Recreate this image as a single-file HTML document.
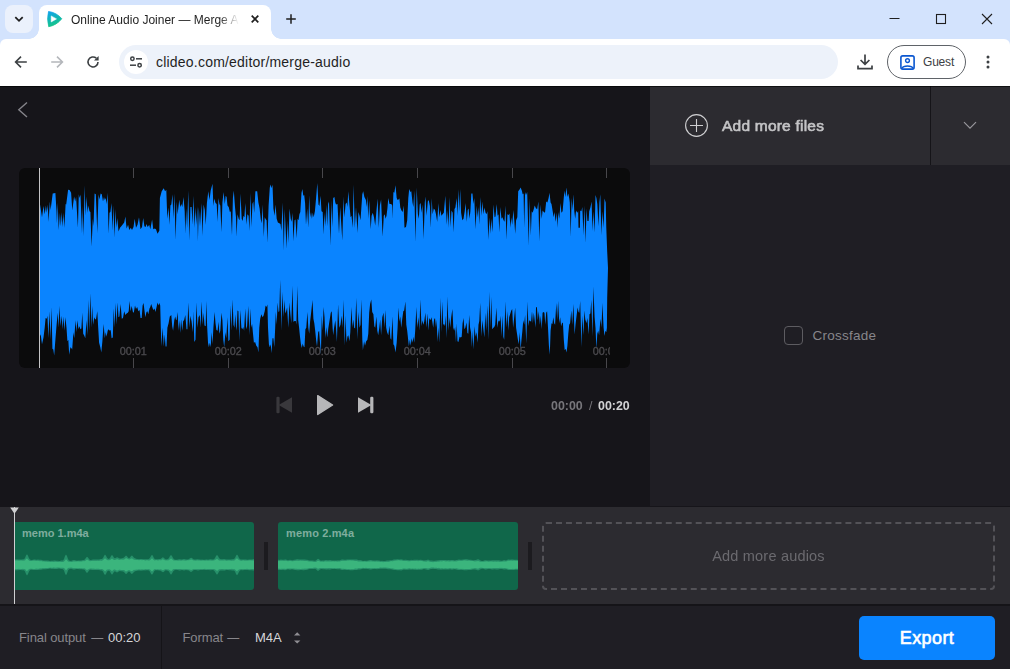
<!DOCTYPE html>
<html lang="en">
<head>
<meta charset="utf-8">
<title>Online Audio Joiner — Merge Audio</title>
<style>
*{box-sizing:border-box;margin:0;padding:0}
html,body{width:1010px;height:669px;overflow:hidden;background:#16151a;font-family:"Liberation Sans",Arial,sans-serif}
.abs{position:absolute}
#chrome{position:absolute;left:0;top:0;width:1010px;height:86px;background:#d3e3fd}
#tabsearch{position:absolute;left:5px;top:5px;width:28px;height:28px;border-radius:8px;background:#ebf1fc}
#tab{position:absolute;left:39px;top:5px;width:232px;height:34px;background:#fff;border-radius:8px 8px 0 0}
#tab:before,#tab:after{content:"";position:absolute;bottom:0;width:10px;height:10px;background:radial-gradient(circle at 0 0,rgba(255,255,255,0) 9.5px,#fff 10px)}
#tab:before{left:-10px}
#tab:after{right:-10px;transform:scaleX(-1)}
#tabtitle{position:absolute;left:32px;top:7px;width:170px;height:16px;font-size:12px;line-height:16px;color:#1f1f1f;white-space:nowrap;overflow:hidden;letter-spacing:0;
 -webkit-mask-image:linear-gradient(90deg,#000 0,#000 148px,transparent 168px);mask-image:linear-gradient(90deg,#000 0,#000 148px,transparent 168px)}
#toolbar{position:absolute;left:0;top:39px;width:1010px;height:47px;background:#fff;border-radius:6px 6px 0 0}
#omni{position:absolute;left:119px;top:6px;width:719px;height:34px;border-radius:17px;background:#edf2fa}
#siteinfo{position:absolute;left:5px;top:5px;width:24px;height:24px;border-radius:12px;background:#fff}
#url{position:absolute;left:37px;top:8px;font-size:14px;line-height:18px;color:#1f1f1f;white-space:nowrap;letter-spacing:0.21px}
#guest{position:absolute;left:887px;top:6px;width:79px;height:34px;border-radius:17px;border:1px solid #5f6368}
#guest span{position:absolute;left:35px;top:8px;font-size:12px;line-height:16px;color:#3c4043;letter-spacing:-0.2px}
svg{position:absolute;overflow:visible}
#app{position:absolute;left:0;top:86px;width:1010px;height:583px;background:#16151a}
#wavebox{position:absolute;left:19px;top:82px;width:611px;height:200px;border-radius:6px;background:#0b0b0c;overflow:hidden}
#side{position:absolute;left:650px;top:0;width:360px;height:420px;background:#1f1e24}
#sidehead{position:absolute;left:0;top:0;width:360px;height:79px;background:#2c2b30}
#sidehead .sep{position:absolute;left:280px;top:0;width:1px;height:79px;background:#151418}
#addfiles{position:absolute;left:72px;top:30px;font-size:15.5px;line-height:20px;font-weight:normal;color:#c4c4c6;white-space:nowrap;-webkit-text-stroke:0.6px #c4c4c6;letter-spacing:0.22px;will-change:transform}
#cb{position:absolute;left:134px;top:240px;width:19px;height:19px;border:1px solid #5d5c61;border-radius:4px}
#cf{position:absolute;left:162.5px;top:242px;font-size:13.5px;line-height:16px;color:#87868b;white-space:nowrap;letter-spacing:0.25px}
.time{position:absolute;top:312px;will-change:transform;transform:translate(0,0.55px);font-size:12.4px;line-height:14px;font-weight:bold;white-space:nowrap}
#timeline{position:absolute;left:0;top:421px;width:1010px;height:98px;background:#2c2b30}
.clip{position:absolute;top:15px;height:68px;border-radius:3px;background:#10674a;overflow:hidden}
.clip b{position:absolute;left:7.5px;top:5px;font-size:11px;line-height:13px;color:rgba(255,255,255,.47);white-space:nowrap;font-weight:bold;letter-spacing:0.15px}
.handle{position:absolute;top:35px;width:4px;height:28px;background:#1c1b1f}
#addmore{position:absolute;left:542px;top:15px;width:453px;height:68px;border:2px dashed #535257;border-radius:4px}
#addmore span{will-change:transform;position:absolute;left:-2px;width:453px;top:24px;text-align:center;font-size:14.5px;line-height:16px;color:#6b6a6f;letter-spacing:0.2px}
#bottom{position:absolute;left:0;top:520px;width:1010px;height:63px;background:#1f1e24}
#bottom .t{position:absolute;top:24px;font-size:13px;line-height:16px;white-space:nowrap}
#export{position:absolute;left:859px;top:10px;width:136px;height:44px;border-radius:5px;background:#0a84ff;color:#fff;font-size:18px;font-weight:normal;-webkit-text-stroke:0.65px #fff;letter-spacing:0.42px;line-height:44px;text-align:center}
</style>
</head>
<body>
<div id="chrome">
  <div id="tabsearch"><svg width="28" height="28" viewBox="0 0 28 28"><path d="M10.3 12.2 L14 15.8 L17.7 12.2" fill="none" stroke="#1f1f1f" stroke-width="1.8"/></svg></div>
  <div id="tab">
    <svg id="favicon" style="left:8px;top:6px" width="16" height="17" viewBox="0 0 16 17"><defs><linearGradient id="fg" x1="0.2" y1="0" x2="0.5" y2="1"><stop offset="0" stop-color="#12a3ea"/><stop offset="0.5" stop-color="#10b7b4"/><stop offset="1" stop-color="#17c681"/></linearGradient></defs><path d="M1.5 0.5 Q9.4 1.5 14.8 7.7 Q9.6 14.2 1.7 15.7 Q-0.3 8 1.5 0.5 Z" fill="url(#fg)" stroke="url(#fg)" stroke-width="0.8" stroke-linejoin="round"/><path d="M4.2 4.9 L9.5 7.9 L4.2 11 Z" fill="#fff" stroke="#fff" stroke-width="0.5" stroke-linejoin="round"/></svg>
    <div id="tabtitle">Online Audio Joiner — Merge Audio Files Online</div>
    <svg style="left:210px;top:8px" width="12" height="12" viewBox="0 0 12 12"><path d="M2.7 2.7 L9.3 9.3 M9.3 2.7 L2.7 9.3" stroke="#1f1f1f" stroke-width="1.7" fill="none"/></svg>
  </div>
  <svg style="left:284px;top:12px" width="14" height="14" viewBox="0 0 14 14"><path d="M7 2.2 V11.8 M2.2 7 H11.8" stroke="#1f1f1f" stroke-width="1.5" fill="none"/></svg>
  <svg style="left:889px;top:13px" width="12" height="12" viewBox="0 0 12 12"><path d="M0.5 5.5 H10.5" stroke="#1f1f1f" stroke-width="1" fill="none"/></svg>
  <svg style="left:936px;top:14px" width="10" height="10" viewBox="0 0 10 10"><rect x="0.5" y="0.5" width="9" height="9" stroke="#1f1f1f" stroke-width="1.1" fill="none"/></svg>
  <svg style="left:982px;top:14px" width="10" height="10" viewBox="0 0 10 10"><path d="M0 0 L10 10 M10 0 L0 10" stroke="#1f1f1f" stroke-width="1.1" fill="none"/></svg>
  <div id="toolbar">
    <svg style="left:13px;top:15px" width="16" height="16" viewBox="0 0 16 16"><path d="M13.8 8 H3 M8 2.6 L2.6 8 L8 13.4" stroke="#3c4043" stroke-width="1.6" fill="none"/></svg>
    <svg style="left:49px;top:15px" width="16" height="16" viewBox="0 0 16 16"><path d="M2.2 8 H13 M8 2.6 L13.4 8 L8 13.4" stroke="#b4b7bb" stroke-width="1.6" fill="none"/></svg>
    <svg style="left:85px;top:15px" width="16" height="16" viewBox="0 0 16 16"><path d="M13 8 A5 5 0 1 1 11.3 4.2" stroke="#3c4043" stroke-width="1.6" fill="none"/><path d="M13.6 2 V6.6 H9 Z" fill="#3c4043"/></svg>
    <div id="omni">
      <div id="siteinfo"><svg style="left:5px;top:5px" width="14" height="14" viewBox="0 0 14 14"><g stroke="#3c4043" stroke-width="1.5" fill="none"><circle cx="3.4" cy="3.8" r="1.7"/><path d="M7 3.8 H13"/><circle cx="10.6" cy="10.2" r="1.7"/><path d="M1 10.2 H7"/></g></svg></div>
      <div id="url">clideo.com/editor/merge-audio</div>
    </div>
    <svg style="left:857px;top:15px" width="16" height="16" viewBox="0 0 16 16"><path d="M8 0.5 V10 M3.6 6 L8 10.4 L12.4 6 M1 11.5 V14.6 H15 V11.5" stroke="#3c4043" stroke-width="1.7" fill="none"/></svg>
    <div id="guest"><svg style="left:12px;top:9px" width="15" height="15" viewBox="0 0 15 15"><rect x="0.9" y="0.9" width="13.2" height="13.2" rx="1.8" stroke="#0b57d0" stroke-width="1.6" fill="none"/><circle cx="7.5" cy="5.6" r="1.9" stroke="#0b57d0" stroke-width="1.4" fill="none"/><path d="M2 13.4 C3.4 10.2 11.6 10.2 13 13.4" stroke="#0b57d0" stroke-width="1.5" fill="none"/></svg><span>Guest</span></div>
    <svg style="left:986px;top:16px" width="4" height="14" viewBox="0 0 4 14"><g fill="#3c4043"><circle cx="2" cy="2" r="1.5"/><circle cx="2" cy="7" r="1.5"/><circle cx="2" cy="12" r="1.5"/></g></svg>
  </div>
</div>
<div id="app">
  <svg style="left:17px;top:15px" width="12" height="18" viewBox="0 0 12 18"><path d="M10 1.5 L1.8 8.8 L10 16" stroke="#85848a" stroke-width="1.4" fill="none"/></svg>
  <div id="wavebox">
    <svg id="wave" style="left:0;top:0;will-change:transform" width="611" height="200" viewBox="0 0 611 200"><defs><clipPath id="wclip"><rect x="0" y="0" width="591" height="200"/></clipPath></defs><path d="M20.7 34.4 23 49.3 24.5 38.1 25.7 46.3 26.9 37.4 27.8 44.8 28.7 36.6 29.6 53.8 30.8 33.6 31.6 41.9 33.7 25.4 36.4 25.1 37.5 43.3 37.9 55.3 38.7 34.4 39.7 62 40.9 44.8 41.8 58.3 42.7 44.1 43.6 59 44.5 44.8 45.4 59.8 46.6 35.9 47.2 36.6 49.1 21.7 50.6 22.1 52.1 24.7 53.3 42.6 55.1 28.4 56.2 33.6 57.1 29.1 58.9 59.8 59.8 26.2 60.6 29.9 61.5 26.6 63 65.8 63.6 37.4 64.5 68 65.6 17.6 66.6 47.8 67.5 28.4 68.6 44.8 69.3 37.4 70.5 43.3 71.4 44.1 72.6 78.5 73.8 50.8 74.5 58.3 75.6 25.4 76.8 26.2 78.3 65 79.5 26.2 80.4 31.4 81.6 25.4 82.8 26.2 84 33.6 85 29.1 85.8 32.1 86.7 29.9 87.6 35.9 88.6 24.7 89.6 65.8 90.5 44.8 91.4 44.1 92.5 35.1 93.5 62.8 94.4 37.4 95.6 69.5 96.5 41.1 97.4 59.8 98.3 50.1 99.5 63.5 101 59.8 102.9 57.5 105.2 54.6 106.4 48.6 107.6 60.5 109.1 56.8 110.3 62 111.8 59.8 113 62 114.5 59 115.7 50.8 117 59.8 118.5 56.8 120 49.3 121.5 61.3 123 59 124.2 50.1 125.4 58.3 126.6 59 127.5 56.1 128.7 59 130.2 56.8 131.3 61.3 133.1 51.6 134.3 61.3 135.8 60.5 137 61.3 138.5 65.8 140.3 62.8 140.9 29.9 142.7 23.2 144.7 20.2 146.1 23.2 147.3 21.7 147.9 38.9 148.4 50.8 149.6 39.6 150.5 56.8 151.4 37.4 152.3 36.6 153.5 26.2 154.4 50.8 155.4 25.4 156.6 71.7 157.7 33.6 158.6 46.3 160.3 31.4 161.2 38.9 162.4 35.9 163.3 38.9 164.5 29.1 165.7 43.3 166.3 65.8 167.2 40.4 168.1 59.8 169.3 22.4 170.5 72.5 171.4 38.9 172.6 38.9 173.5 56.8 174.4 27.7 175.6 59.8 176.5 38.9 177.4 56.8 178.3 38.1 178.9 73.2 179.8 38.9 181 58.3 182.5 35.1 183.5 68 184.6 36.6 185.8 41.9 186.7 56.8 187.9 35.1 189.3 23.2 190.5 32.1 191.7 22.4 193.5 15.7 194.4 38.1 195.3 30.6 196.5 35.1 197.7 35.9 198.6 53.8 199.5 29.9 200.4 35.9 201.3 37.4 202.5 64.3 203.4 34.4 204.6 23.9 205.8 35.9 206.7 27.7 207.6 29.1 208.5 37.4 209.7 38.9 210.9 44.1 211.8 43.3 213 67.3 213.9 29.9 214.8 22.4 216 38.9 217 49.3 217.6 68.8 218.5 46.3 219.7 50.8 220.6 52.3 221.5 25.4 222.7 50.8 223.6 53.1 224.5 47.8 225.4 49.3 226.3 35.1 227.5 56.8 228.4 46.3 229.6 47.8 230.5 62.8 231.3 24.7 232.5 59 233.4 35.9 234.3 33.6 235.2 44.8 236.4 23.2 238.2 23.2 239.4 34.4 240.6 40.4 241.8 51.6 242.7 55.3 243.6 36.6 244.8 68.8 245.7 49.3 246.9 51.6 247.6 52.3 248.4 74.7 249.6 37.4 250.8 19.4 251.7 16.4 252.6 20.2 253.5 16.4 254.4 40.4 255.6 47.8 256.5 36.6 257.7 50.8 258.9 54.6 260.3 55.3 261.5 56.1 262.4 62.8 263.6 34.4 264.8 82.2 265.7 41.1 266.6 59.8 267.5 80.7 268.4 52.3 269.3 74.7 270.5 40.4 271.7 50.8 272.6 53.8 273.5 44.8 274.4 73.2 275.6 52.3 276.5 51.6 277.7 70.3 278.6 50.8 279.5 52.3 280.4 46.3 281.3 44.1 282.5 24.7 283.4 20.9 284.3 27.7 285.2 26.9 286.1 35.1 287 56.8 288.2 40.4 289.3 59.8 290.2 26.9 291.1 49.3 292 44.1 292.9 50.8 293.8 44.8 294.7 49.3 295.9 43.3 297.1 29.9 298.3 14.9 299.5 36.6 300.4 38.1 301.6 27.7 302.5 43.3 303.7 44.1 304.6 66.5 305.5 44.8 306.4 58.3 307.3 36.6 308.2 58.3 309.1 35.9 310 33.6 311.5 77.7 312.4 32.1 313.3 59 314.2 29.9 315.4 29.1 316.3 34.4 317 36.6 318.5 35.9 320 65.8 321.2 38.9 323.3 72.5 324.5 28.4 325.4 49.3 326.6 35.9 327.8 34.4 328.4 38.9 329.3 23.2 330.5 37.4 331.6 49.3 332.5 47.8 333.7 59.8 334.6 16.4 335.8 59.8 337 38.9 338.5 65 339.4 44.1 340.6 47.8 341.5 52.3 342.4 38.9 343.3 26.2 344.2 23.2 345.4 29.1 346.9 32.1 347.8 38.9 348.4 27.7 349.3 50.8 350.2 32.1 351.7 61.3 352.6 47.8 353.8 44.8 355 49.3 356.2 57.5 357.4 43.3 358.6 30.6 359.8 59.8 360.9 37.4 362.1 31.4 363.6 68.8 364.8 47.8 365.7 46.3 366.6 50.8 367.5 47.8 368.4 40.4 369.3 29.9 370.5 35.9 372.3 35.9 373.2 37.4 373.5 50.8 374.4 23.9 375.3 24.7 376.5 17.2 377.7 29.9 378.6 32.1 379.5 31.4 380.4 30.6 381.3 39.6 382.5 42.6 383.7 44.1 384.6 37.4 385.5 59.8 387 59 388.2 52.3 389.3 29.9 390.2 20.9 391.4 23.9 392.3 23.2 393.5 34.4 394.4 38.9 395.3 22.4 396.5 74 397.7 19.4 398.9 46.3 399.8 50.8 400.7 36.6 401.6 35.1 402.5 44.8 403.4 36.6 404.6 71 405.8 34.4 406.4 28.4 407.6 47.8 408.8 33.6 409.7 32.1 410.9 38.1 411.8 59.8 412.7 29.9 413.6 46.3 414.8 40.4 416 41.9 417 46.3 418.2 53.8 419.4 35.1 420.3 49.3 421.5 41.9 422.4 47.8 423.6 46.3 424.8 44.8 426.3 27.7 427.8 56.8 428.7 41.9 429.6 59.8 430.5 29.1 431.6 59 432.5 42.6 433.7 44.8 434.6 64.3 435.5 41.1 436.4 39.6 437.6 29.9 438.5 47.8 439.4 20.9 440.3 43.3 441.2 20.9 442.1 44.8 443.3 52.3 444.5 50.8 445.7 43.3 446.6 35.1 447.8 53.8 448.7 41.9 449.6 40.4 450.5 50.8 451.4 43.3 452.3 25.4 453.5 25.4 454.4 35.9 455.3 29.9 456.5 61.3 457.7 37.4 458.6 49.3 459.5 38.9 460.3 56.8 461.2 29.1 462.4 47.8 463.3 33.6 464.5 46.3 465.4 39.6 466.6 44.8 467.5 46.3 468.4 43.3 469.3 71.7 470.5 49.3 471.4 65.8 472.3 50.8 473.5 64.3 474.4 36.6 475.6 49.3 476.5 48.6 477.7 35.9 478.6 47.8 479.5 46.3 480.4 64.3 481.3 38.9 482.5 50.8 483.4 49.3 484.6 52.3 485.5 53.8 486.4 37.4 487.6 71.7 488.4 46.3 489.6 47.1 490.5 45.6 491.4 59.8 492.3 49.3 493.2 56.8 494.4 41.9 495.3 52.3 496.2 65.8 497.1 52.3 498.3 49.3 499.2 23.2 500.4 21.7 501.6 19.4 502.8 22.4 503.7 26.2 504.6 25.4 505.2 59.8 506.1 23.9 507 26.9 508.2 23.9 509.7 77.7 510.6 29.9 511.8 67.3 512.7 43.3 513.6 44.8 514.5 41.9 515.7 37.4 517 40.4 518.2 41.1 519.4 33.6 520.3 73.2 521.5 36.6 522.7 50.8 523.6 42.6 524.8 44.1 526 44.8 527.2 33.6 528.4 34.4 529.6 29.9 530.5 24.7 531.6 34.4 532.5 35.9 533.7 43.3 534.6 49.3 535.5 44.1 536.7 53.8 537.9 44.8 538.5 59.8 539.4 44.1 540.3 50.8 541.5 35.1 542.4 44.8 543.6 43.3 544.5 32.9 545.4 22.4 546.3 29.1 547.5 19.4 548.4 29.1 549.3 25.4 550.2 29.9 550.8 34.4 551.7 68.8 552.6 29.9 553.5 41.9 554.4 26.2 555.3 43.3 556.2 50.8 557.1 42.6 558.3 44.8 559.2 43.3 559.5 59.8 560.9 59.8 561.2 42.6 562.4 43.3 563.3 38.9 564.5 67.3 565.4 37.4 566.6 74.7 567.5 40.4 568.4 53.1 569.6 53.1 570.2 43.3 571.4 39.6 572.6 33.6 573.5 62.8 574.4 43.3 575.6 64.3 576.5 26.9 577.4 29.9 578.3 35.9 579.5 58.3 580.4 34.4 581.3 26.2 582.5 67.3 583.4 43.3 584.6 59.8 585.5 30.6 586.7 34.4 587.3 59.8 588.2 83.7 589 100 L589 100 588.2 129.9 587.9 159.8 587.3 164.3 586.4 162.8 585.5 168 584.6 159.8 583.4 135.1 582.5 159.8 581.6 150.8 581 156.8 580.1 167.3 579.2 162.8 578.3 165.8 577.4 180.7 576.5 159.8 575.6 149.3 574.4 118.7 573.5 168.8 572.3 132.1 571.4 145.6 570.5 146.3 569.6 166.5 568.4 150.1 567.5 155.3 566.3 151.6 565.4 142.6 564.5 167.3 563.3 147.8 562.4 179.2 561.2 132.9 560.3 144.8 559.5 144.1 558.6 139.6 557.4 149.3 556.5 156.8 555.6 166.5 554.4 135.9 553.2 156.8 552.3 142.6 551.1 155.3 550.2 156.8 549.3 165.8 548.4 177.7 547.5 184.5 546.6 180.7 545.7 182.2 544.8 171.7 543.9 154.6 543 155.3 542.1 158.3 541.2 149.3 540.3 155.3 539.1 132.9 538.2 152.3 537.3 135.1 536.1 156.8 535.2 155.3 534.3 149.3 533.4 156.1 532.5 155.3 531.6 162.8 530.8 186.7 529.9 177.7 529 159.8 528.1 143.3 527.2 144.8 526.3 156.8 525.4 144.8 524.5 144.1 523.6 144.8 522.7 161.3 521.8 147.8 520.9 156.8 519.7 143.3 518.8 152.3 517.9 138.9 517 139.6 516.6 159.8 515.7 152.3 514.8 144.8 513.9 155.3 513 143.3 512.1 153.8 511.2 153.1 510.3 152.3 509.4 158.3 508.5 133.6 507.3 175.5 506.1 147.1 505.2 156.8 504.3 152.3 503.4 162.8 502.5 171.7 501.6 181.5 500.7 164.3 499.8 176.2 498.9 171.7 498 165.8 497.1 159.8 496.2 139.6 495 151.6 494.1 159.8 493.2 141.1 492.3 142.6 491.1 146.3 490.2 149.3 489.3 162.8 488.4 143.3 487.3 159.8 486.4 133.6 485.2 171.7 484.3 168.8 483.4 147.8 482.5 168.8 481.6 147.8 481 153.8 480.1 152.3 479.2 153.8 478.3 159.8 477.4 139.6 476.2 156.8 475.3 159 474.4 159.8 473.2 161.3 472.3 129.1 471.4 159.8 470.5 123.9 469.3 171.7 468.4 137.4 467.2 162.8 466.3 144.8 465.4 169.5 464.2 159.8 463.3 152.3 462.4 168.8 461.2 135.1 460.3 153.1 459.5 156.8 458.6 174.7 457.4 164.3 456.5 168.8 455.6 158.3 454.4 181.5 453.5 162.8 452.9 179.2 452 164.3 451.1 159.8 450.2 147.1 449.3 165.8 448.4 165 447.5 154.6 446.3 159.8 445.4 161.3 444.5 150.1 443.6 155.3 442.7 168.8 441.8 169.5 440.6 168.8 439.4 174 438.5 173.2 437.6 155.3 437 174.7 436.1 159 435.2 162.8 434.3 159.8 433.4 141.1 432.2 149.3 431.3 159.8 430.5 149.3 429.6 162.8 428.4 128.4 427.5 170.3 426.6 147.8 426 158.3 425.1 156.1 424.2 156.8 423.3 133.6 422.4 164.3 421.5 129.9 420.3 174.7 419.4 159.8 418.5 174 417.6 151.6 417 159.8 416 150.1 415.1 151.6 414.2 159.8 413.3 153.8 412.4 149.3 411.5 152.3 410.3 150.1 409.4 162.8 408.5 145.6 407.3 159.8 406.4 144.8 405.2 153.8 404.3 156.8 403.4 152.3 402.5 158.3 401.3 131.4 400.4 162.8 399.5 149.3 398.3 159.8 397.4 138.9 396.2 162.8 395.3 174.7 394.4 168.8 393.5 174.7 392.6 170.3 391.7 177.7 390.8 171.7 389.9 178.5 389 170.3 388.2 162.8 387.3 156.8 386.4 133.6 385.2 142.6 384.3 143.3 383.1 152.3 382.2 159.8 381.3 148.6 380.4 153.8 379.5 139.6 378.6 159.8 377.7 174.7 376.5 184.5 375.3 177.7 374.4 176.2 373.5 148.6 372.3 171.7 371.4 170.3 370.5 157.5 369.3 167.3 368.1 164.3 367.2 159.8 366.3 141.9 365.4 159.8 364.5 144.8 363.3 149.3 362.1 167.3 361.2 151.6 360.3 159.8 359.2 167.3 358.3 162.8 357.4 148.6 356.2 159.8 355.3 158.3 354.4 146.3 353.2 144.1 352.3 131.4 351.1 135.9 350.2 144.8 349.3 165.8 348.4 171.7 347.2 173.2 346 177.7 345.1 173.2 343.9 182.2 343.3 171.7 342.4 131.4 341.5 156.8 340.6 159.8 339.4 144.1 338.5 171.7 337.3 129.9 336.1 160.5 335.2 159.8 334.3 151.6 333.4 159.8 332.5 138.9 331.3 164.3 330.5 173.2 329.3 167.3 328.4 168.8 327.5 174.7 326.6 147.8 325.7 177.7 324.5 132.1 323.6 159.8 322.7 147.8 321.5 156.8 320.3 159.8 319.1 136.6 317.9 174 317 159.8 316.3 152.3 315.1 159.8 314.2 167.3 313.6 159.8 312.7 143.3 311.8 144.8 310.6 152.3 309.4 159.8 308.2 169.5 307.3 159 306.4 170.3 305.5 149.3 304.6 138.9 303.7 162.8 302.8 147.8 301.9 186.7 301 174.7 300.1 162.8 299.2 164.3 298 178.5 297.1 171.7 296.2 162.8 295.3 155.3 294.4 150.8 293.5 132.1 292.3 143.3 291.1 153.8 290.2 165.8 289.3 159.8 288.4 144.1 287.3 159.8 286.4 161.3 285.5 179.2 284.6 178.5 283.7 175.5 282.8 180 281.9 176.2 281 168.8 280.1 159.8 279.2 152.3 278.3 117.9 277.4 156.8 276.8 153.1 275.6 153.1 274.4 153.8 273.5 117.9 272.3 155.3 271.4 146.3 270.5 134.4 269.3 159.8 268.1 139.6 267.2 143.3 266.3 145.6 265.4 132.1 264.5 149.3 263.3 123.9 262.4 162.8 261.2 112 260.3 143.3 259.5 144.1 258.6 134.4 257.7 156.8 256.8 144.1 256.2 159.8 255.3 179.2 254.4 170.3 253.5 170.3 252.6 185.2 251.7 176.2 250.8 179.2 249.9 176.2 249 159.8 248.4 136.6 247.5 138.9 246.6 137.4 245.7 143.3 244.5 147.8 243.6 149.3 242.4 146.3 241.2 150.8 240.3 159.8 239.4 184.5 238.5 179.2 237.3 177.7 236.1 174 234.9 174.7 234 165.8 233.1 156.1 232.2 159.8 231.3 140.4 230.5 167.3 229.3 138.1 228.1 158.3 227.2 161.3 226.3 140.4 225.1 162.8 224.2 159 223.3 161.3 222.4 159.8 221.2 141.9 220.3 173.2 219.4 143.3 218.5 142.6 217.6 162.8 217 158.3 216.3 146.3 215.4 159.8 214.5 156.8 213.6 131.4 212.4 162.8 211.5 137.4 210.6 171.7 209.4 173.2 208.5 149.3 207.3 170.3 206.4 164.3 205.2 179.2 204.3 171.7 203.4 152.3 202.5 144.8 201.3 162.8 200.4 165.8 199.5 153.8 198.6 162.8 197.4 162 196.5 155.3 195.6 144.1 194.4 159.8 193.5 176.2 192.6 164.3 191.7 179.2 190.8 174.7 189.9 179.2 189 174.7 188.2 159.8 187.3 132.9 186.7 158.3 185.5 157.5 184.6 144.8 183.7 156.8 182.5 133.6 181.6 159.8 180.7 147.1 179.5 149.3 178.6 159.8 177.4 134.4 176.5 171.7 175.3 174 174.4 143.3 173.8 164.3 172.6 153.8 171.4 147.8 170.5 159.8 169.3 134.4 168.4 161.3 167.5 161.3 166.3 147.1 165.1 152.3 164.2 153.1 163.3 162.8 162.1 151.6 161.2 165 160.3 152.3 159.5 162.8 158.6 144.1 157.7 151.6 157.1 152.3 156.2 148.6 155.3 152.3 154.1 162.8 153.2 158.3 152.3 147.1 150.8 148.6 149.6 155.3 148.4 159.8 147.5 178.5 146.6 178.5 145.7 166.5 144.8 178.5 143.6 159.8 142.4 178.5 141.8 159.8 141.2 137.4 140.3 135.1 139.4 137.4 138.5 134.4 137.6 138.9 136.4 144.1 135.5 140.4 134.3 141.9 133.4 139.6 132.2 135.9 131.3 138.9 130.5 140.4 129.3 146.3 128.4 143.3 127.5 144.1 126.3 149.3 125.4 141.9 124.5 135.1 123.6 137.4 122.7 150.1 121.5 150.1 120.6 141.9 119.4 143.3 118.2 138.9 117 141.1 116 137.4 114.8 144.8 113.9 144.1 112.7 138.1 111.5 143.3 110.6 132.9 109.7 143.3 108.8 144.8 107.6 145.6 106.4 147.1 105.2 143.3 104 150.1 102.8 150.8 101.6 135.9 100.4 148.6 99.5 149.3 98.6 134.4 97.4 156.8 96.5 135.1 95.6 159.8 94.7 140.4 93.8 169.5 92.6 170.3 91.7 162 90.8 162.8 89.6 161.3 88.7 162.8 87.6 168.8 86.7 164.3 85.8 170.3 84.6 156.1 83.4 173.2 82.3 184.5 81.3 179.2 80.1 174.7 79.2 159.8 78.3 143.3 77.1 150.8 76.2 151.6 75.3 149.3 74.1 156.8 73.2 138.1 72.3 159.8 71.4 125.4 70.2 162.8 69.3 132.1 68.4 167.3 67.5 152.3 66.3 170.3 65.1 167.3 64.2 165.8 63.3 144.8 62.4 160.5 61.5 161.3 60.3 158.3 59.5 161.3 58.3 152.3 57.4 164.3 56.5 152.3 55.3 170.3 54.4 164.3 53.2 181.5 52.3 180 51.4 179.2 50.2 186.7 49.3 171.7 48.4 173.2 47.5 159.8 46.4 149.3 45.4 162.8 44.5 148.6 43.6 161.3 42.7 147.8 41.5 158.3 40.5 138.1 39.6 159.8 38.7 144.8 37.6 156.8 36.4 171.7 35.2 187.4 34.3 181.5 33.4 180.7 32.5 138.9 31.5 171.7 30.5 143.3 29.4 170.3 28.4 147.8 27.8 150.8 26.6 150.1 25.7 159.8 24.5 169.5 23 176.2 21.9 168 20.7 165.8Z" fill="#0a84ff"/><g fill="#48474b"><rect x="114" y="0" width="1" height="10"/><rect x="114" y="190" width="1" height="10"/><rect x="209" y="0" width="1" height="10"/><rect x="209" y="190" width="1" height="10"/><rect x="303" y="0" width="1" height="10"/><rect x="303" y="190" width="1" height="10"/><rect x="398" y="0" width="1" height="10"/><rect x="398" y="190" width="1" height="10"/><rect x="493" y="0" width="1" height="10"/><rect x="493" y="190" width="1" height="10"/><rect x="587" y="0" width="1" height="10"/><rect x="587" y="190" width="1" height="10"/></g><g clip-path="url(#wclip)" font-family="Liberation Sans, Arial, sans-serif" font-size="10.8" fill="#4b4a4e" stroke="#4b4a4e" stroke-width="0.35" text-anchor="middle"><text x="114.2" y="186.8">00:01</text><text x="209.2" y="186.8">00:02</text><text x="303.2" y="186.8">00:03</text><text x="398.2" y="186.8">00:04</text><text x="493.2" y="186.8">00:05</text><text x="587.2" y="186.8">00:06</text></g><rect x="20" y="0" width="1" height="200" fill="#c4c4c6"/></svg>
  </div>
  <svg style="left:276.4px;top:310px" width="17" height="18" viewBox="0 0 17 18"><rect x="0.4" y="0.8" width="3.2" height="16.4" rx="1.2" fill="#39383c"/><path d="M16 1.2 V16.8 L2.6 9 Z" fill="#39383c"/></svg>
  <svg style="left:316px;top:308px" width="18" height="22" viewBox="0 0 18 22"><path d="M1.7 1.6 L16.6 11 L1.7 20.4 Z" fill="#b7b7b9" stroke="#b7b7b9" stroke-width="1.4" stroke-linejoin="round"/></svg>
  <svg style="left:357px;top:310px" width="17" height="18" viewBox="0 0 17 18"><rect x="13.2" y="0.8" width="3.2" height="16.4" rx="1.2" fill="#b7b7b9"/><path d="M1 1.2 V16.8 L14.4 9 Z" fill="#b7b7b9"/></svg>
  <div class="time" style="left:550px;margin-left:0.6px;color:#77767b">00:00</div>
  <div class="time" style="left:588px;margin-left:0.6px;color:#77767b;font-weight:normal">/</div>
  <div class="time" style="left:598px;margin-left:0.4px;color:#d2d2d4">00:20</div>
  <div id="side">
    <div id="sidehead">
      <svg style="left:35px;top:28px" width="23" height="23" viewBox="0 0 23 23"><circle cx="11.5" cy="11.5" r="10.9" stroke="#cfcfd1" stroke-width="1.1" fill="none"/><path d="M11.5 5 V18 M5 11.5 H18" stroke="#cfcfd1" stroke-width="1.1" fill="none"/></svg>
      <div id="addfiles">Add more files</div>
      <div class="sep"></div>
      <svg style="left:313px;top:35px" width="14" height="9" viewBox="0 0 14 9"><path d="M1 1.2 L7 7.2 L13 1.2" stroke="#98979c" stroke-width="1.2" fill="none"/></svg>
    </div>
    <div id="cb"></div>
    <div id="cf">Crossfade</div>
  </div>
  <div id="timeline">
    <div class="clip" style="left:15px;width:239px;border-radius:0 3px 3px 0"><svg style="left:0;top:0" width="239" height="68" viewBox="0 0 239 68"><path d="M0 37.3 1 37.4 2 37.3 3 37.4 4 37.6 5 37.6 6 37.5 7 37.4 8 37.3 9 37.3 10 36.1 11 33.6 12 32.2 13 33.7 14 36.2 15 37.6 16 37.9 17 37.9 18 37.7 19 37.5 20 37.5 21 37.7 22 37.7 23 37.6 24 37.8 25 37.8 26 37.8 27 38.1 28 38.4 29 38.4 30 38.4 31 38.4 32 38.5 33 38.5 34 38.8 35 39 36 38.8 37 38.7 38 38.8 39 38.6 40 38.6 41 38.7 42 38.7 43 38.8 44 39 45 38.9 46 38.6 47 38.6 48 38.4 49 37.1 50 34.1 51 32.4 52 34.1 53 37 54 38.4 55 38.7 56 38.9 57 38.6 58 38.2 59 38 60 38.2 61 38.6 62 38.7 63 38.5 64 38.4 65 38.4 66 38.4 67 38.3 68 38.1 69 38 70 37.3 71 35.7 72 34.7 73 35.5 74 37 75 37.9 76 37.9 77 37.7 78 37.6 79 37.5 80 37.5 81 37.6 82 37.6 83 37.6 84 37.6 85 37.3 86 37.1 87 37 88 36 89 33.9 90 32.5 91 33.7 92 35.8 93 36.8 94 36.9 95 36 96 34.1 97 32.9 98 34 99 35.8 100 36.3 101 35.7 102 35.2 103 35.6 104 36.3 105 36.5 106 36.4 107 36.3 108 36.1 109 35.6 110 34.4 111 33.5 112 34.2 113 35.6 114 36.2 115 35.5 116 34.1 117 33.6 118 34.5 119 35.7 120 36.3 121 36.7 122 36.9 123 37.1 124 37.2 125 37 126 36.9 127 37 128 37.2 129 37.3 130 37.2 131 37.3 132 37.3 133 37.3 134 37 135 35.8 136 33.9 137 32.8 138 34.1 139 36.2 140 37.3 141 37.3 142 37.3 143 37.3 144 37 145 37 146 36.7 147 35.8 148 35.3 149 35.9 150 37 151 37.4 152 37.2 153 36.9 154 36 155 34.1 156 32.9 157 34.1 158 36.1 159 37.2 160 37.7 161 37.8 162 37.7 163 37.5 164 37.2 165 37.2 166 37.4 167 37.5 168 37.3 169 37.1 170 37.3 171 37.5 172 37.4 173 37.4 174 37 175 36.2 176 35.7 177 36.1 178 37.1 179 37.5 180 37.5 181 37.5 182 37.3 183 37.2 184 37.4 185 37.6 186 37.7 187 37.6 188 37.7 189 37.8 190 37.7 191 37.5 192 37.5 193 37.7 194 37.6 195 37.3 196 37.3 197 37.5 198 37.6 199 37.2 200 35.9 201 34 202 32.9 203 34 204 36.1 205 37.1 206 37.2 207 37.2 208 37.2 209 37 210 37.2 211 37.6 212 37.6 213 37.5 214 37.4 215 37.4 216 37.4 217 37.2 218 37.2 219 37 220 36 221 33.7 222 32.4 223 33.7 224 35.9 225 37.2 226 37.5 227 37.4 228 37.4 229 37.5 230 37.5 231 37.5 232 37.7 233 37.7 234 37.4 235 37.4 236 37.4 237 37.4 238 37.2 239 37 L239 48.6 238 48.4 237 48.2 236 48.2 235 48.2 234 48.2 233 47.9 232 47.9 231 48.1 230 48.1 229 48.1 228 48.2 227 48.2 226 48.1 225 48.4 224 49.7 223 51.9 222 53.2 221 51.9 220 49.6 219 48.6 218 48.4 217 48.4 216 48.2 215 48.2 214 48.2 213 48.1 212 48 211 48 210 48.4 209 48.6 208 48.4 207 48.4 206 48.4 205 48.5 204 49.5 203 51.6 202 52.7 201 51.6 200 49.7 199 48.4 198 48 197 48.1 196 48.3 195 48.3 194 48 193 47.9 192 48.1 191 48.1 190 47.9 189 47.8 188 47.9 187 48 186 47.9 185 48 184 48.2 183 48.4 182 48.3 181 48.1 180 48.1 179 48.1 178 48.5 177 49.5 176 49.9 175 49.4 174 48.6 173 48.2 172 48.2 171 48.1 170 48.3 169 48.5 168 48.3 167 48.1 166 48.2 165 48.4 164 48.4 163 48.1 162 47.9 161 47.8 160 47.9 159 48.4 158 49.5 157 51.5 156 52.7 155 51.5 154 49.6 153 48.7 152 48.4 151 48.2 150 48.6 149 49.7 148 50.3 147 49.8 146 48.9 145 48.6 144 48.6 143 48.3 142 48.3 141 48.3 140 48.3 139 49.4 138 51.5 137 52.8 136 51.7 135 49.8 134 48.6 133 48.3 132 48.3 131 48.3 130 48.4 129 48.3 128 48.4 127 48.6 126 48.7 125 48.6 124 48.4 123 48.5 122 48.7 121 48.9 120 49.3 119 49.9 118 51.1 117 52 116 51.5 115 50.1 114 49.4 113 50 112 51.4 111 52.1 110 51.2 109 50 108 49.5 107 49.3 106 49.2 105 49.1 104 49.3 103 50 102 50.4 101 49.9 100 49.3 99 49.8 98 51.6 97 52.7 96 51.5 95 49.6 94 48.7 93 48.8 92 49.8 91 51.9 90 53.1 89 51.7 88 49.6 87 48.6 86 48.5 85 48.3 84 48 83 48 82 48 81 48 80 48.1 79 48.1 78 48 77 47.9 76 47.7 75 47.7 74 48.6 73 50.1 72 50.9 71 49.9 70 48.3 69 47.6 68 47.5 67 47.3 66 47.2 65 47.2 64 47.2 63 47.1 62 46.9 61 47 60 47.4 59 47.6 58 47.4 57 47 56 46.7 55 46.9 54 47.2 53 48.6 52 51.5 51 53.2 50 51.5 49 48.5 48 47.2 47 47 46 47 45 46.7 44 46.6 43 46.8 42 46.9 41 46.9 40 47 39 47 38 46.8 37 46.9 36 46.8 35 46.6 34 46.8 33 47.1 32 47.1 31 47.2 30 47.2 29 47.2 28 47.2 27 47.5 26 47.8 25 47.8 24 47.8 23 48 22 47.9 21 47.9 20 48.1 19 48.1 18 47.9 17 47.7 16 47.7 15 48 14 49.4 13 51.9 12 53.4 11 52 10 49.5 9 48.3 8 48.3 7 48.2 6 48.1 5 48 4 48 3 48.2 2 48.3 1 48.2 0 48.3Z" fill="#27906a"/><path d="M0 38.7 1 38.4 2 38.5 3 38.5 4 38.8 5 38.4 6 38.5 7 38.6 8 38.8 9 38.4 10 38.5 11 37.1 12 36.4 13 37.5 14 38.4 15 38.9 16 38.9 17 38.9 18 38.6 19 38.7 20 38.6 21 39.1 22 38.8 23 38.8 24 38.9 25 39.3 26 39 27 39.3 28 39.6 29 39.3 30 39.7 31 39.5 32 39.7 33 39.7 34 39.8 35 39.9 36 40.1 37 39.7 38 40 39 40 40 39.8 41 39.8 42 40 43 40 44 40.1 45 39.8 46 39.9 47 39.9 48 39.9 49 39.6 50 38.6 51 37.2 52 38.3 53 39.6 54 39.8 55 39.8 56 40 57 39.9 58 39.5 59 39.4 60 39.6 61 39.4 62 39.6 63 39.2 64 39.5 65 39.4 66 39.4 67 39.4 68 39.1 69 39.3 70 39.1 71 38.2 72 37.6 73 38.1 74 38.7 75 39.2 76 39.1 77 39.1 78 38.8 79 39 80 38.7 81 38.9 82 38.8 83 38.8 84 38.9 85 38.4 86 38.7 87 38.7 88 38.1 89 37.3 90 36.2 91 37 92 38.1 93 38.2 94 38.3 95 38.1 96 37.3 97 36.4 98 37.3 99 38 100 38.1 101 37.4 102 37.2 103 37.2 104 37.9 105 37.8 106 37.6 107 37.5 108 37.7 109 37.5 110 36.9 111 35.9 112 36.5 113 37.1 114 37.6 115 37.2 116 36.6 117 36.4 118 37 119 37.8 120 37.7 121 38 122 37.9 123 38 124 38.3 125 38 126 38 127 38.3 128 38.1 129 38.1 130 38.4 131 38.5 132 38 133 38.5 134 38.4 135 38.2 136 37.2 137 36.2 138 37.2 139 38.2 140 38.6 141 38.1 142 38.3 143 38.4 144 38.2 145 38.1 146 38.4 147 37.5 148 37.3 149 37.9 150 38.3 151 38.6 152 38.2 153 38.4 154 37.9 155 37.3 156 36.5 157 37.1 158 38.3 159 38.5 160 38.6 161 38.6 162 38.5 163 38.7 164 38.6 165 38.5 166 38.7 167 38.4 168 38.3 169 38.4 170 38.4 171 38.7 172 38.3 173 38.3 174 38.2 175 38 176 37.5 177 37.8 178 38.3 179 38.6 180 38.4 181 38.7 182 38.3 183 38.5 184 38.4 185 38.6 186 38.7 187 38.5 188 38.5 189 38.6 190 38.8 191 38.4 192 38.6 193 38.7 194 38.6 195 38.5 196 38.5 197 38.7 198 38.6 199 38.6 200 38.1 201 37.5 202 36.7 203 37.4 204 38.4 205 38.4 206 38.5 207 38.6 208 38.5 209 38.4 210 38.3 211 38.7 212 38.7 213 38.4 214 38.5 215 38.6 216 38.7 217 38.8 218 38.4 219 38.7 220 38 221 37.1 222 36.3 223 37.3 224 38 225 38.4 226 38.7 227 38.7 228 38.3 229 38.5 230 38.7 231 38.6 232 38.8 233 38.5 234 38.4 235 38.3 236 38.6 237 38.6 238 38.6 239 38.4 L239 47.2 238 47 237 47 236 47 235 47.3 234 47.2 233 47.1 232 46.8 231 47 230 46.9 229 47.1 228 47.3 227 46.9 226 46.9 225 47.2 224 47.6 223 48.3 222 49.3 221 48.5 220 47.6 219 46.9 218 47.2 217 46.8 216 46.9 215 47 214 47.1 213 47.2 212 46.9 211 46.9 210 47.3 209 47.2 208 47.1 207 47 206 47.1 205 47.2 204 47.2 203 48.2 202 48.9 201 48.1 200 47.5 199 47 198 47 197 46.9 196 47.1 195 47.1 194 47 193 46.9 192 47 191 47.2 190 46.8 189 47 188 47.1 187 47.1 186 46.9 185 47 184 47.2 183 47.1 182 47.3 181 46.9 180 47.2 179 47 178 47.3 177 47.8 176 48.1 175 47.6 174 47.4 173 47.3 172 47.3 171 46.9 170 47.2 169 47.2 168 47.3 167 47.2 166 46.9 165 47.1 164 47 163 46.9 162 47.1 161 47 160 47 159 47.1 158 47.3 157 48.5 156 49.1 155 48.3 154 47.7 153 47.2 152 47.4 151 47 150 47.3 149 47.7 148 48.3 147 48.1 146 47.2 145 47.5 144 47.4 143 47.2 142 47.3 141 47.5 140 47 139 47.4 138 48.4 137 49.4 136 48.4 135 47.4 134 47.2 133 47.1 132 47.6 131 47.1 130 47.2 129 47.5 128 47.5 127 47.3 126 47.6 125 47.6 124 47.3 123 47.6 122 47.7 121 47.6 120 47.9 119 47.8 118 48.6 117 49.2 116 49 115 48.4 114 48 113 48.5 112 49.1 111 49.7 110 48.7 109 48.1 108 47.9 107 48.1 106 48 105 47.8 104 47.7 103 48.4 102 48.4 101 48.2 100 47.5 99 47.6 98 48.3 97 49.2 96 48.3 95 47.5 94 47.3 93 47.4 92 47.5 91 48.6 90 49.4 89 48.3 88 47.5 87 46.9 86 46.9 85 47.2 84 46.7 83 46.8 82 46.8 81 46.7 80 46.9 79 46.6 78 46.8 77 46.5 76 46.5 75 46.4 74 46.9 73 47.5 72 48 71 47.4 70 46.5 69 46.3 68 46.5 67 46.2 66 46.2 65 46.2 64 46.1 63 46.4 62 46 61 46.2 60 46 59 46.2 58 46.1 57 45.7 56 45.6 55 45.8 54 45.8 53 46 52 47.3 51 48.4 50 47 49 46 48 45.7 47 45.7 46 45.7 45 45.8 44 45.5 43 45.6 42 45.6 41 45.8 40 45.8 39 45.6 38 45.6 37 45.9 36 45.5 35 45.7 34 45.8 33 45.9 32 45.9 31 46.1 30 45.9 29 46.3 28 46 27 46.3 26 46.6 25 46.3 24 46.7 23 46.8 22 46.8 21 46.5 20 47 19 46.9 18 47 17 46.7 16 46.7 15 46.7 14 47.2 13 48.1 12 49.2 11 48.5 10 47.1 9 47.2 8 46.8 7 47 6 47.1 5 47.2 4 46.8 3 47.1 2 47.1 1 47.2 0 46.9Z" fill="#3bb57d"/></svg><b style="left:7px;letter-spacing:0">memo 1.m4a</b></div>
    <div class="handle" style="left:264px"></div>
    <div class="clip" style="left:278px;width:240px"><svg style="left:0;top:0" width="240" height="68" viewBox="0 0 240 68"><path d="M0 37.6 1 37.9 2 37.7 3 37.6 4 37.7 5 37.8 6 37.7 7 37.4 8 37.6 9 38 10 38.3 11 38.1 12 37.8 13 38 14 38.3 15 38.2 16 37.8 17 37.7 18 37.5 19 37.3 20 37.3 21 37.4 22 37.5 23 37.5 24 37.5 25 37.4 26 37.4 27 37.6 28 37.7 29 37.8 30 38.1 31 38.5 32 38.6 33 38.6 34 38.5 35 38.5 36 38.7 37 38.8 38 38.4 39 37.4 40 36.7 41 37.3 42 38.2 43 38.7 44 38.6 45 38.4 46 38.4 47 38.3 48 38.1 49 38.2 50 38.3 51 38.2 52 38.1 53 38.3 54 38.5 55 38.5 56 38.5 57 38.6 58 38.6 59 38.4 60 38.3 61 38.4 62 38.3 63 37.8 64 37.5 65 37.6 66 37.8 67 37.8 68 37.7 69 37.6 70 37.5 71 37.5 72 37.4 73 37.4 74 37.4 75 37.4 76 37.6 77 37.6 78 37.5 79 37.6 80 38 81 38.2 82 38.1 83 38.3 84 38.6 85 38.9 86 38.8 87 38.7 88 38.8 89 38.7 90 38.5 91 38.3 92 38.1 93 38 94 38.3 95 38.5 96 38.6 97 38.6 98 38.5 99 38.3 100 38.5 101 38.6 102 38.8 103 38.9 104 38.8 105 38.9 106 38.9 107 38.9 108 38.8 109 38.5 110 38.4 111 38.4 112 38.3 113 38.3 114 38.2 115 37.8 116 37.6 117 37.6 118 37.5 119 37.3 120 37.3 121 37.4 122 37.4 123 37.2 124 37.4 125 37.8 126 38 127 37.8 128 37.8 129 37.9 130 37.9 131 38.2 132 38.2 133 37.8 134 38 135 38.1 136 37.8 137 37.8 138 37.8 139 37.7 140 37.8 141 37.9 142 37.8 143 37.8 144 37.9 145 38.3 146 38.5 147 38.3 148 38.2 149 37.9 150 37.6 151 37.9 152 38.4 153 38.6 154 38.6 155 38.8 156 38.7 157 38.7 158 38.6 159 38.4 160 38.2 161 38.2 162 38 163 37.9 164 38 165 38.1 166 38 167 38 168 38.1 169 38.2 170 38.1 171 38.1 172 38.3 173 38.1 174 37.9 175 38.1 176 38.3 177 38.4 178 38.1 179 37.9 180 37.7 181 37.6 182 37.7 183 37.8 184 37.7 185 37.6 186 37.4 187 37.3 188 37.3 189 37.3 190 37.5 191 37.7 192 37.7 193 37.7 194 37.9 195 38.2 196 38.2 197 38 198 37.9 199 37.5 200 37.2 201 37.5 202 38.2 203 38.7 204 38.9 205 38.9 206 38.5 207 38.2 208 38.2 209 38.4 210 38.6 211 38.5 212 38.5 213 38.4 214 38.2 215 38.2 216 38.3 217 38.3 218 38.2 219 38.2 220 38.2 221 38.3 222 38.5 223 38.7 224 38.7 225 38.4 226 38.1 227 38.2 228 38.4 229 38.1 230 37.6 231 37.6 232 37.7 233 37.6 234 37.5 235 37.6 236 37.7 237 37.8 238 37.8 239 37.8 240 37.9 L240 47.7 239 47.8 238 47.8 237 47.8 236 47.9 235 48 234 48.1 233 48 232 47.9 231 48 230 48 229 47.5 228 47.2 227 47.4 226 47.5 225 47.2 224 46.9 223 46.9 222 47.1 221 47.3 220 47.4 219 47.4 218 47.4 217 47.3 216 47.3 215 47.4 214 47.4 213 47.2 212 47.1 211 47.1 210 47 209 47.2 208 47.4 207 47.4 206 47.1 205 46.7 204 46.7 203 46.9 202 47.4 201 48.1 200 48.4 199 48.1 198 47.7 197 47.6 196 47.4 195 47.4 194 47.7 193 47.9 192 47.9 191 47.9 190 48.1 189 48.3 188 48.3 187 48.3 186 48.2 185 48 184 47.9 183 47.8 182 47.9 181 48 180 47.9 179 47.7 178 47.5 177 47.2 176 47.3 175 47.5 174 47.7 173 47.5 172 47.3 171 47.5 170 47.5 169 47.4 168 47.5 167 47.6 166 47.6 165 47.5 164 47.6 163 47.7 162 47.6 161 47.4 160 47.4 159 47.2 158 47 157 46.9 156 46.9 155 46.8 154 47 153 47 152 47.2 151 47.7 150 48 149 47.7 148 47.4 147 47.3 146 47.1 145 47.3 144 47.7 143 47.8 142 47.8 141 47.7 140 47.8 139 47.9 138 47.8 137 47.8 136 47.8 135 47.5 134 47.6 133 47.8 132 47.4 131 47.4 130 47.7 129 47.7 128 47.8 127 47.8 126 47.6 125 47.8 124 48.2 123 48.4 122 48.2 121 48.2 120 48.3 119 48.3 118 48.1 117 48 116 48 115 47.8 114 47.4 113 47.3 112 47.3 111 47.2 110 47.2 109 47.1 108 46.8 107 46.7 106 46.7 105 46.7 104 46.8 103 46.7 102 46.8 101 47 100 47.1 99 47.3 98 47.1 97 47 96 47 95 47.1 94 47.3 93 47.6 92 47.5 91 47.3 90 47.1 89 46.9 88 46.8 87 46.9 86 46.8 85 46.7 84 47 83 47.3 82 47.5 81 47.4 80 47.6 79 48 78 48.1 77 48 76 48 75 48.2 74 48.2 73 48.2 72 48.2 71 48.1 70 48.1 69 48 68 47.9 67 47.8 66 47.8 65 48 64 48.1 63 47.8 62 47.3 61 47.2 60 47.3 59 47.2 58 47 57 47 56 47.1 55 47.1 54 47.1 53 47.3 52 47.5 51 47.4 50 47.3 49 47.4 48 47.5 47 47.3 46 47.2 45 47.2 44 47 43 46.9 42 47.4 41 48.3 40 48.9 39 48.2 38 47.2 37 46.8 36 46.9 35 47.1 34 47.1 33 47 32 47 31 47.1 30 47.5 29 47.8 28 47.9 27 48 26 48.2 25 48.2 24 48.1 23 48.1 22 48.1 21 48.2 20 48.3 19 48.3 18 48.1 17 47.9 16 47.8 15 47.4 14 47.3 13 47.6 12 47.8 11 47.5 10 47.3 9 47.6 8 48 7 48.2 6 47.9 5 47.8 4 47.9 3 48 2 47.9 1 47.7 0 48Z" fill="#27906a"/><path d="M0 38.8 1 39.2 2 38.7 3 38.8 4 38.8 5 38.8 6 38.9 7 38.8 8 38.7 9 39 10 39.2 11 39.1 12 39.1 13 39.1 14 39.2 15 39.2 16 39.1 17 38.9 18 38.8 19 38.8 20 38.7 21 38.9 22 38.6 23 38.7 24 38.8 25 38.8 26 38.9 27 39 28 38.9 29 39.1 30 39.2 31 39.6 32 39.5 33 39.5 34 39.6 35 39.7 36 40 37 39.9 38 40 39 39.3 40 38.8 41 39.1 42 39.5 43 39.7 44 39.6 45 39.7 46 39.7 47 39.3 48 39.6 49 39.4 50 39.6 51 39.5 52 39.6 53 39.6 54 39.6 55 39.3 56 39.6 57 39.5 58 39.2 59 39.7 60 39.4 61 39.5 62 39.5 63 39.1 64 38.9 65 38.8 66 38.9 67 38.7 68 38.9 69 38.4 70 38.5 71 38.5 72 38.3 73 38.4 74 38.5 75 38.4 76 38.7 77 39 78 39 79 38.9 80 39.4 81 39.5 82 39.4 83 39.4 84 39.6 85 39.8 86 39.6 87 39.5 88 39.8 89 39.7 90 39.5 91 39.6 92 39.6 93 39.2 94 39.5 95 39.4 96 39.5 97 39.7 98 39.4 99 39.6 100 39.7 101 39.6 102 40.1 103 40.1 104 39.8 105 40.2 106 40 107 40.1 108 40.1 109 39.8 110 39.9 111 39.7 112 39.5 113 39.1 114 39.3 115 39.2 116 38.8 117 38.7 118 38.6 119 38.4 120 38.3 121 38.3 122 38.6 123 38.5 124 38.6 125 39 126 39 127 39 128 38.9 129 38.9 130 39.2 131 39.3 132 39.3 133 38.9 134 39 135 39.1 136 38.9 137 39 138 39.1 139 38.7 140 39.2 141 38.9 142 38.8 143 39 144 39 145 39.3 146 39.5 147 39.5 148 39.7 149 39.4 150 39 151 39.4 152 39.7 153 40 154 40 155 40.2 156 40.1 157 39.7 158 40.1 159 39.7 160 39.6 161 39.8 162 39.3 163 39.2 164 39.5 165 39.1 166 39.1 167 39.3 168 39.4 169 39.2 170 39.2 171 39.4 172 39.5 173 39.3 174 39.2 175 39.3 176 39.4 177 39.2 178 39.4 179 39.3 180 38.9 181 38.8 182 38.7 183 38.9 184 38.7 185 38.8 186 38.3 187 38.5 188 38.6 189 38.7 190 38.7 191 38.5 192 38.7 193 38.9 194 39 195 39.1 196 39.3 197 39.5 198 39.3 199 39.2 200 38.9 201 39.3 202 39.8 203 39.8 204 39.8 205 39.7 206 39.7 207 39.4 208 39.6 209 39.3 210 39.7 211 39.7 212 39.6 213 39.4 214 39.4 215 39.7 216 39.7 217 39.5 218 39.7 219 39.7 220 39.6 221 39.7 222 39.9 223 39.7 224 39.8 225 39.4 226 39.5 227 39.6 228 39.4 229 39.2 230 38.8 231 38.7 232 38.7 233 38.5 234 38.7 235 38.8 236 38.4 237 38.8 238 38.8 239 38.8 240 38.9 L240 46.7 239 46.8 238 46.8 237 46.8 236 47.2 235 46.8 234 46.9 233 47.1 232 46.9 231 46.9 230 46.8 229 46.4 228 46.2 227 46 226 46.1 225 46.2 224 45.8 223 45.9 222 45.7 221 45.9 220 46 219 45.9 218 45.9 217 46.1 216 45.9 215 45.9 214 46.2 213 46.2 212 46 211 45.9 210 45.9 209 46.3 208 46 207 46.2 206 45.9 205 45.9 204 45.8 203 45.8 202 45.8 201 46.3 200 46.7 199 46.4 198 46.3 197 46.1 196 46.3 195 46.5 194 46.6 193 46.7 192 46.9 191 47.1 190 46.9 189 46.9 188 47 187 47.1 186 47.3 185 46.8 184 46.9 183 46.7 182 46.9 181 46.8 180 46.7 179 46.3 178 46.2 177 46.4 176 46.2 175 46.3 174 46.4 173 46.3 172 46.1 171 46.2 170 46.4 169 46.4 168 46.2 167 46.3 166 46.5 165 46.5 164 46.1 163 46.4 162 46.3 161 45.8 160 46 159 45.9 158 45.5 157 45.9 156 45.5 155 45.4 154 45.6 153 45.6 152 45.9 151 46.2 150 46.6 149 46.2 148 45.9 147 46.1 146 46.1 145 46.3 144 46.6 143 46.6 142 46.8 141 46.7 140 46.4 139 46.9 138 46.5 137 46.6 136 46.7 135 46.5 134 46.6 133 46.7 132 46.3 131 46.3 130 46.4 129 46.7 128 46.7 127 46.6 126 46.6 125 46.6 124 47 123 47.1 122 47 121 47.3 120 47.3 119 47.2 118 47 117 46.9 116 46.8 115 46.4 114 46.3 113 46.5 112 46.1 111 45.9 110 45.7 109 45.8 108 45.5 107 45.5 106 45.6 105 45.4 104 45.8 103 45.5 102 45.5 101 46 100 45.9 99 46 98 46.2 97 45.9 96 46.1 95 46.2 94 46.1 93 46.4 92 46 91 46 90 46.1 89 45.9 88 45.8 87 46.1 86 46 85 45.8 84 46 83 46.2 82 46.2 81 46.1 80 46.2 79 46.7 78 46.6 77 46.6 76 46.9 75 47.2 74 47.1 73 47.2 72 47.3 71 47.1 70 47.1 69 47.2 68 46.7 67 46.9 66 46.7 65 46.8 64 46.7 63 46.5 62 46.1 61 46.1 60 46.2 59 45.9 58 46.4 57 46.1 56 46 55 46.3 54 46 53 46 52 46 51 46.1 50 46 49 46.2 48 46 47 46.3 46 45.9 45 45.9 44 46 43 45.9 42 46.1 41 46.5 40 46.8 39 46.3 38 45.6 37 45.7 36 45.6 35 45.9 34 46 33 46.1 32 46.1 31 46 30 46.4 29 46.5 28 46.7 27 46.6 26 46.7 25 46.8 24 46.8 23 46.9 22 47 21 46.7 20 46.9 19 46.8 18 46.8 17 46.7 16 46.5 15 46.4 14 46.4 13 46.5 12 46.5 11 46.5 10 46.4 9 46.6 8 46.9 7 46.8 6 46.7 5 46.8 4 46.8 3 46.8 2 46.9 1 46.4 0 46.8Z" fill="#3bb57d"/></svg><b style="left:8px">memo 2.m4a</b></div>
    <div class="handle" style="left:528px"></div>
    <div id="addmore"><span>Add more audios</span></div>
    <svg style="left:10px;top:0" width="9" height="98" viewBox="0 0 9 98"><path d="M0.2 0.6 H8.8 L4.5 6.8 Z" fill="#d0d0d2"/><rect x="4" y="0" width="1" height="98" fill="#d0d0d2"/></svg>
  </div>
  <div class="abs" style="left:0;top:518px;width:1010px;height:2px;background:#151418"></div>
  <div class="abs" style="left:0;top:0;width:1010px;height:1px;background:rgba(0,0,0,.6)"></div>
  <div id="bottom">
    <div class="abs" style="left:161px;top:0;width:1px;height:63px;background:#151418"></div>
    <div class="t" style="left:19px;color:#87868b;letter-spacing:-0.1px">Final output</div>
    <div class="t" style="left:91.3px;color:#87868b;font-size:12px">—</div>
    <div class="t" style="left:108px;color:#d6d6d8">00:20</div>
    <div class="t" style="left:182.5px;color:#87868b;letter-spacing:-0.1px">Format</div>
    <div class="t" style="left:227.3px;color:#87868b;font-size:12px">—</div>
    <div class="t" style="left:255px;color:#d6d6d8">M4A</div>
    <svg style="left:293px;top:26px" width="8" height="13" viewBox="0 0 8 13"><path d="M1 3.4 L4.2 0.3 L7.4 3.4 Z M1 8.5 L4.2 11.5 L7.4 8.5 Z" fill="#8f8e93"/></svg>
    <div id="export">Export</div>
  </div>
</div>
</body>
</html>
